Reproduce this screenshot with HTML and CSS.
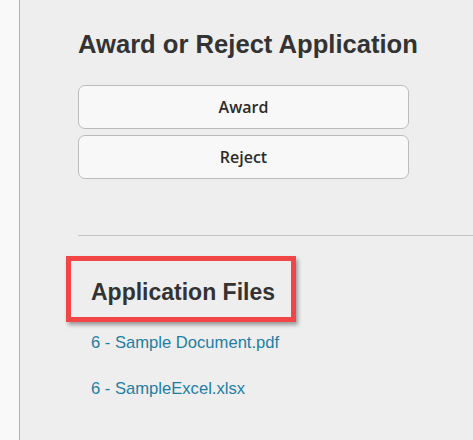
FILE: index.html
```html
<!DOCTYPE html>
<html lang="en">
<head>
<meta charset="utf-8">
<title>Award or Reject Application</title>
<link rel="stylesheet" href="styles.css">
</head>
<body>
<div class="layout">
  <aside class="sidebar"></aside>
  <main class="main">
    <h2 class="title">Award or Reject Application</h2>
    <div class="actions">
      <button class="btn" type="button">Award</button>
      <button class="btn" type="button">Reject</button>
    </div>
    <hr class="divider">
    <section class="files">
      <div class="highlight">
        <h3 class="files-title">Application Files</h3>
      </div>
      <ul class="file-list">
        <li><a href="#" class="file-link">6 - Sample Document.pdf</a></li>
        <li><a href="#" class="file-link">6 - SampleExcel.xlsx</a></li>
      </ul>
    </section>
  </main>
</div>
</body>
</html>
```

FILE: styles.css
```css
html, body {
  margin: 0;
  padding: 0;
  height: 100%;
  background: #eeeeee;
  font-family: "Liberation Sans", Arial, sans-serif;
  overflow: hidden;
}

.layout {
  display: flex;
  min-height: 100%;
}

.sidebar {
  width: 19px;
  flex: 0 0 19px;
  background: #f9f9f9;
  border-right: 1px solid #b4b4b4;
}

.main {
  flex: 1;
  padding-left: 58px;
  padding-top: 30px;
}

.title {
  margin: 0;
  font-size: 25.6px;
  font-weight: bold;
  color: #333333;
  line-height: normal;
}

.actions {
  display: flex;
  flex-direction: column;
  gap: 6px;
  width: 331px;
  margin-top: 26px;
}

.btn {
  height: 44px;
  border: 1px solid #bcbcbc;
  border-radius: 7px;
  background: #f8f8f8;
  font-family: "Open Sans", "Noto Sans", sans-serif;
  font-weight: 600;
  font-size: 16px;
  color: #2b2b2b;
  padding: 0;
}

.divider {
  margin: 56px 0 0 0;
  border: 0;
  border-top: 1px solid #c4c4c4;
  height: 0;
}

.files {
  padding-left: 13px;
}

.highlight {
  display: inline-block;
  margin-top: 20px;
  margin-left: -25px;
  border: 5px solid #f24646;
  padding: 18px 16px 11px 20px;
  box-shadow: 2px 3px 4px rgba(0, 0, 0, 0.35);
}

.files-title {
  margin: 0;
  font-size: 23px;
  font-weight: bold;
  color: #333333;
  line-height: normal;
}

.file-list {
  list-style: none;
  margin: 11px 0 0 0;
  padding: 0;
  display: flex;
  flex-direction: column;
  gap: 26px;
}

.file-link {
  font-size: 16.6px;
  color: #1f7ea3;
  text-decoration: none;
  line-height: normal;
}
```
